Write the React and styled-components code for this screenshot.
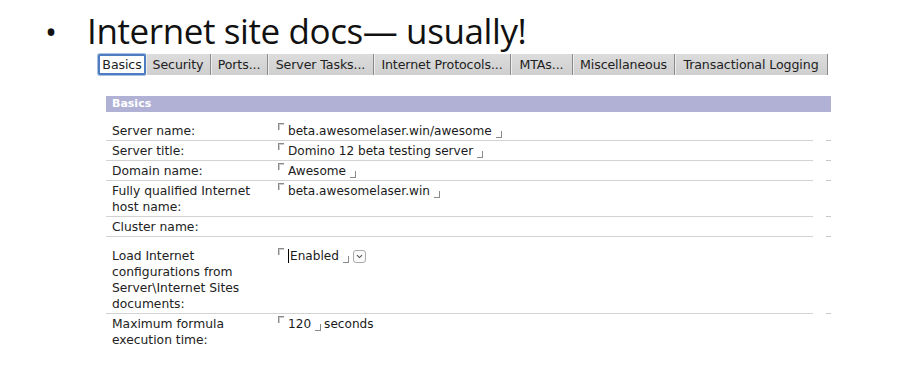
import React from 'react';
import styled, { createGlobalStyle } from 'styled-components';

const GlobalStyle = createGlobalStyle`
    body {
        margin: 0;
        background: #fff;
    }
`

const Page = styled.div`
    width: 900px;
    height: 392px;
    overflow: hidden;
    padding-top: 10px;
    box-sizing: border-box;
`

const Title = styled.div`
    display: flex;
    align-items: baseline;
    font-family: "Open Sans", sans-serif;
    font-size: 35px;
    letter-spacing: -0.4px;
    line-height: 42px;
    height: 42px;
    color: #111;
`

const Bullet = styled.span`
    width: 87px;
    padding-left: 45px;
    box-sizing: border-box;
    font-size: 32px;
`

const Panel = styled.div`
    margin-left: 98px;
    width: 733px;
    font-family: "DejaVu Sans", sans-serif;
`

const TabBar = styled.div`
    display: flex;
    height: 21px;
    margin-top: 2px;
`

const Tab = styled.div`
    display: flex;
    align-items: center;
    justify-content: center;
    width: ${p => p.w}px;
    box-sizing: border-box;
    font-size: 12.6px;
    letter-spacing: -0.1px;
    color: #222;
    white-space: nowrap;
    background: ${p => p.active ? '#fff' : 'linear-gradient(#dcdcdc, #cfcfcf)'};
    border: ${p => p.active ? '2px solid #4d7cc0' : 'none'};
    border-right: ${p => p.active ? '2px solid #4d7cc0' : '1px solid #8a8a8a'};
    border-radius: ${p => p.active ? '2px' : '0'};
    box-shadow: ${p => p.active ? '0 0 0 1px #a9c0e2' : 'inset 1px 0 0 #eee'};
`

const Section = styled.div`
    margin-left: 8px;
    margin-top: 21px;
`

const SectionHead = styled.div`
    height: 16px;
    background: #b1b1d6;
    color: #fff;
    font-weight: bold;
    font-size: 11px;
    line-height: 16px;
    padding-left: 6px;
`

const Table = styled.div`
    margin-top: 9px;
`

const Row = styled.div`
    display: flex;
    align-items: flex-end;
`

const RowBody = styled.div`
    display: flex;
    align-items: flex-start;
    width: 707px;
    padding: ${p => p.pad || 2}px 0 1px 6px;
    border-bottom: ${p => p.last ? 'none' : '1px solid #d3d3d3'};
    box-sizing: border-box;
    line-height: 16px;
`

const Dash = styled.div`
    width: 5px;
    height: 1px;
    margin-left: 13px;
    background: ${p => p.last ? 'transparent' : '#c8c8c8'};
`

const Label = styled.div`
    width: 166px;
    padding-right: 18px;
    box-sizing: border-box;
    font-size: 12.3px;
    color: #222;
    flex-shrink: 0;
`

const Value = styled.div`
    display: flex;
    align-items: center;
    height: 16px;
    font-size: 12.1px;
    color: #1a1a1a;
    white-space: nowrap;
`

const OpenMark = styled.span`
    display: inline-block;
    width: 5px;
    height: 6px;
    border-top: 1px solid #8a8a8a;
    border-left: 1px solid #8a8a8a;
    box-shadow: 1px 1px 0 #ccc inset;
    align-self: flex-start;
    margin-top: 0;
    margin-right: 4px;
`

const CloseMark = styled.span`
    display: inline-block;
    width: 5px;
    height: 6px;
    border-bottom: 1px solid #8a8a8a;
    border-right: 1px solid #8a8a8a;
    align-self: flex-end;
    margin-bottom: 1px;
    margin-left: 4px;
    margin-right: 3px;
`

const Caret = styled.span`
    display: inline-block;
    width: 1px;
    height: 14px;
    background: #000;
    margin-right: 1px;
`

const DropButton = styled.span`
    display: inline-flex;
    align-items: center;
    justify-content: center;
    width: 11px;
    height: 11px;
    border: 1px solid #aaa;
    border-radius: 3px;
    margin-left: 1px;
    background: #fafafa;
`

const Field = ({ children, caret }) => (
    <>
        <OpenMark />
        {caret && <Caret />}
        {children}
        <CloseMark />
    </>
)

const rows = [
    { label: 'Server name:', value: <Field>beta.awesomelaser.win/awesome</Field> },
    { label: 'Server title:', value: <Field>Domino 12 beta testing server</Field> },
    { label: 'Domain name:', value: <Field>Awesome</Field> },
    { label: 'Fully qualified Internet host name:', value: <Field>beta.awesomelaser.win</Field> },
    { label: 'Cluster name:', value: null },
    {
        label: 'Load Internet configurations from Server\\Internet Sites documents:',
        pad: 11,
        value: (
            <>
                <Field caret>Enabled</Field>
                <DropButton>
                    <svg width="7" height="5" viewBox="0 0 7 5"><path d="M1 1.2 L3.5 3.6 L6 1.2" fill="none" stroke="#555" strokeWidth="1.1" /></svg>
                </DropButton>
            </>
        )
    },
    { label: 'Maximum formula execution time:', last: true, value: <><Field>120</Field>seconds</> },
]

const tabs = [
    ['Basics', 48], ['Security', 65], ['Ports...', 57], ['Server Tasks...', 106],
    ['Internet Protocols...', 137], ['MTAs...', 62], ['Miscellaneous', 102], ['Transactional Logging', 153],
]

const App = () => (
    <Page>
        <GlobalStyle />
        <Title>
            <Bullet>•</Bullet>
            <span>Internet site docs— usually!</span>
        </Title>
        <Panel>
            <TabBar>
                {tabs.map(([t, w], i) => <Tab key={t} w={w} active={i === 0}>{t}</Tab>)}
            </TabBar>
            <Section>
                <SectionHead>Basics</SectionHead>
                <Table>
                    {rows.map(r => (
                        <Row key={r.label}>
                            <RowBody pad={r.pad} last={r.last}>
                                <Label>{r.label}</Label>
                                <Value>{r.value}</Value>
                            </RowBody>
                            <Dash last={r.last} />
                        </Row>
                    ))}
                </Table>
            </Section>
        </Panel>
    </Page>
)

export default App;
